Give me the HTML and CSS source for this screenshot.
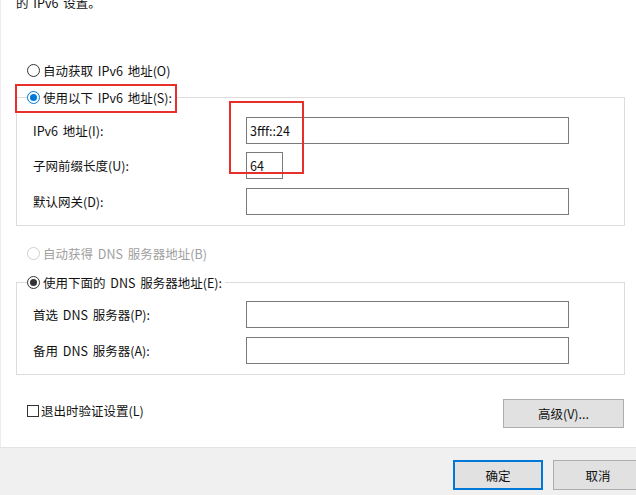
FILE: index.html
```html
<!DOCTYPE html>
<html lang="zh-CN">
<head>
    <meta charset="UTF-8">
    <title>Internet 协议版本 6 (TCP/IPv6) 属性</title>
    <link rel="stylesheet" href="styles.css">
</head>
<body>
    <div class="dialog">
        <p class="intro">的 IPv6 设置。</p>

        <label class="choice"><input type="radio" name="ip"> 自动获取 IPv6 地址(O)</label>

        <fieldset class="group group-ip">
            <legend><label class="choice focus"><input type="radio" name="ip" checked> 使用以下 IPv6 地址(S):</label></legend>
            <div class="fields">
                <label>IPv6 地址(I):</label>
                <input class="field" type="text" value="3fff::24">
                <label>子网前缀长度(U):</label>
                <input class="field short" type="text" value="64">
                <label>默认网关(D):</label>
                <input class="field" type="text">
            </div>
        </fieldset>

        <label class="choice disabled"><input type="radio" name="dns" disabled> 自动获得 DNS 服务器地址(B)</label>

        <fieldset class="group group-dns">
            <legend><label class="choice"><input type="radio" name="dns" checked> 使用下面的 DNS 服务器地址(E):</label></legend>
            <div class="fields">
                <label>首选 DNS 服务器(P):</label>
                <input class="field" type="text">
                <label>备用 DNS 服务器(A):</label>
                <input class="field" type="text">
            </div>
        </fieldset>

        <div class="bottom-row">
            <label class="check"><input type="checkbox"> 退出时验证设置(L)</label>
            <button class="btn btn-advanced">高级(V)...</button>
        </div>

        <!-- red marks drawn over the dialog -->
        <div class="mark mark-option"></div>
        <div class="mark mark-address"></div>
    </div>

    <div class="footer">
        <div class="footer-buttons">
            <button class="btn btn-default">确定</button>
            <button class="btn">取消</button>
        </div>
    </div>
</body>
</html>
```

FILE: styles.css
```css
html, body {
    margin: 0;
    overflow: hidden;
}
body {
    width: 636px;
    height: 495px;
    font-family: "Noto Sans CJK SC", "Noto Sans", sans-serif;
    font-size: 12.5px;
    word-spacing: 2px;
    color: #111;
    background-color: #fff;
}
.dialog {
    display: flow-root;
    position: relative;
    height: 447px;
    padding: 0 11px 0 15px;
    border-left: 1px solid #ececec;
    background-color: #fff;
}
.intro {
    margin: -6px 0 0;
    line-height: 17px;
}
.choice {
    display: flex;
    align-items: center;
    height: 17px;
    line-height: 17px;
    gap: 3px;
    padding-left: 11px;
    margin-top: 50.5px;
}
.choice.disabled {
    color: #a0a0a0;
    margin-top: 19px;
    padding-left: 11px;
}
.choice input {
    appearance: none;
    -webkit-appearance: none;
    box-sizing: border-box;
    width: 13px;
    height: 13px;
    margin: 0;
    border: 1px solid #333;
    border-radius: 50%;
    background-color: #fff;
    display: grid;
    place-items: center;
}
.choice input:checked::after {
    content: "";
    width: 7px;
    height: 7px;
    border-radius: 50%;
    background-color: #333;
}
.choice.focus input {
    border-color: #0078d7;
}
.choice.focus input:checked::after {
    background-color: #0078d7;
}
.choice input:disabled {
    border-color: #cfcfcf;
}
.group {
    margin: 10.5px 0 0;
    padding: 10.5px 0 10px 10px;
    border: 1px solid #dcdcdc;
}
.group-dns {
    margin-top: 12px;
}
.group legend {
    padding: 0 3px 0 0;
}
.group legend .choice {
    margin-top: 0;
    padding-left: 0;
}
.fields {
    display: grid;
    grid-template-columns: 213px 323px;
    row-gap: 8.5px;
    align-items: center;
    padding-left: 6px;
}
.field {
    box-sizing: border-box;
    width: 323px;
    height: 27px;
    margin: 0;
    padding: 0 3px;
    border: 1px solid #7a7a7a;
    font-family: inherit;
    font-size: 12.5px;
    color: #111;
    background-color: #fff;
}
.field.short {
    width: 37px;
}
.bottom-row {
    display: flex;
    justify-content: space-between;
    align-items: center;
    margin-top: 24px;
    padding-left: 11px;
}
.check {
    display: flex;
    align-items: center;
    gap: 2px;
    margin-bottom: 5px;
}
.check input {
    appearance: none;
    -webkit-appearance: none;
    box-sizing: border-box;
    width: 12px;
    height: 12px;
    margin: 0;
    border: 1px solid #333;
    background-color: #fff;
}
.btn {
    box-sizing: border-box;
    height: 30px;
    width: 90px;
    margin: 0;
    padding: 0;
    border: 1px solid #adadad;
    background-color: #e1e1e1;
    font-family: inherit;
    font-size: 12.5px;
    color: #111;
}
.btn-advanced {
    width: 121px;
    height: 29px;
    margin-right: 1px;
}
.btn-default {
    border: 2px solid #0078d7;
}
.footer {
    display: flex;
    justify-content: flex-end;
    height: 48px;
    padding-top: 12px;
    box-sizing: border-box;
    border-top: 1px solid #e3e3e3;
    background-color: #f0f0f0;
}
.footer-buttons {
    display: flex;
    gap: 10px;
    margin-right: -7px;
}
.mark {
    position: absolute;
    box-sizing: border-box;
    border: 2px solid #e8302b;
}
.mark-option {
    left: 14px;
    top: 84px;
    width: 162px;
    height: 29px;
}
.mark-address {
    left: 228px;
    top: 101px;
    width: 75px;
    height: 73px;
}
```
